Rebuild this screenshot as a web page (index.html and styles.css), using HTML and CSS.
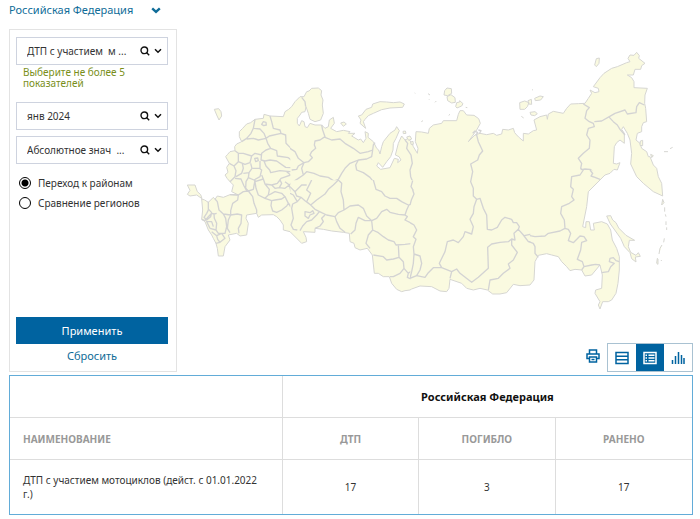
FILE: index.html
```html
<!DOCTYPE html>
<html lang="ru">
<head>
<meta charset="utf-8">
<title>Показатели ДТП</title>
<link rel="stylesheet" href="styles.css">
</head>
<body>
<svg class="sprite" aria-hidden="true">
  <symbol id="search" viewBox="0 0 10 10"><circle cx="4.3" cy="4.3" r="3.3"/><path d="M6.500 6.500 9.200 9.200"/></symbol>
  <symbol id="chevron" viewBox="0 0 8 6"><path d="M1 1.200 4 4.200 7 1.200"/></symbol>
</svg>
<main class="page">
  <header>
    <button class="region" type="button">Российская Федерация
      <svg class="region-arrow" viewBox="0 0 10 7"><path d="M1.200 1.300 5 4.800 8.800 1.300"/></svg>
    </button>
  </header>
  <section class="workspace">
    <form class="panel">
      <div class="field">
        <select class="select" aria-label="Показатель"><option>ДТП с участием&nbsp; м ...</option></select>
        <span class="field-icons"><svg class="search"><use href="#search"/></svg><svg class="chevron"><use href="#chevron"/></svg></span>
      </div>
      <p class="hint">Выберите не более 5 показателей</p>
      <div class="field">
        <select class="select" aria-label="Период"><option>янв 2024</option></select>
        <span class="field-icons"><svg class="search"><use href="#search"/></svg><svg class="chevron"><use href="#chevron"/></svg></span>
      </div>
      <div class="field">
        <select class="select" aria-label="Тип значения"><option>Абсолютное знач&nbsp; ...</option></select>
        <span class="field-icons"><svg class="search"><use href="#search"/></svg><svg class="chevron"><use href="#chevron"/></svg></span>
      </div>
      <div class="modes">
        <label class="mode"><input type="radio" name="mode" checked>Переход к районам</label>
        <label class="mode"><input type="radio" name="mode">Сравнение регионов</label>
      </div>
      <div class="actions">
        <button class="apply" type="button">Применить</button>
        <button class="reset" type="reset">Сбросить</button>
      </div>
    </form>
    <div class="view">
      <svg class="map" viewBox="531 120 1548 820" role="img" aria-label="Карта регионов">
        <defs>
          <clipPath id="west"><path d="M0 0H331V600H0Z"/></clipPath>
          <clipPath id="north"><path d="M0 0H390V301H0Z"/></clipPath>
          <clipPath id="south"><path d="M0 0H361V400H0Z"/></clipPath>
          <clipPath id="taymyr"><path d="M0 0H400V331H0Z"/></clipPath>
          <clipPath id="baikal"><path d="M0 0H361V400H0Z"/></clipPath>
          <clipPath id="chukotka"><path d="M0 0H450V391H0Z"/></clipPath>
        </defs>
        <g class="land">
          <path d="M605 597 L614 600 625 607 640 592 645 598 652 588 670 592 690 584 715 585 695 575 700 555 690 545 682 536 675 525 684 517 680 502 688 490 677 470 683 463 690 455 705 452 704 440 710 432 725 425 718 410 718 395 728 385 740 372 752 368 765 358 790 355 792 343 810 348 850 350 855 335 866 328 875 320 885 305 900 290 912 290 920 275 927 273 935 265 955 264 965 272 963 285 969 300 967 315 970 340 962 360 945 365 930 358 925 340 918 320 915 335 905 337 900 345 892 355 892 370 898 378 905 362 912 365 915 380 922 383 930 370 945 375 965 375 975 385 985 380 988 360 1000 352 1003 370 992 385 1010 395 1030 391 1050 395 1045 400 1065 400 1055 408 1075 420 1082 417 1090 428 1098 415 1095 395 1105 400 1104 412 1120 425 1130 445 1136 450 1140 462 1145 440 1150 425 1170 400 1185 390 1190 380 1198 392 1188 415 1180 430 1179 450 1172 470 1160 485 1148 502 1135 488 1130 498 1142 508 1170 503 1183 475 1195 478 1193 488 1203 480 1197 470 1186 465 1195 430 1205 408 1215 420 1225 415 1237 432 1240 440 1252 460 1254 445 1246 425 1248 395 1265 396 1285 400 1288 385 1300 375 1325 370 1330 362 1370 362 1375 343 1380 332 1390 332 1400 345 1422 346 1436 356 1441 370 1430 390 1405 425 1425 405 1440 400 1460 404 1480 400 1490 406 1505 402 1508 388 1525 390 1540 385 1544 398 1550 405 1558 413 1570 423 1570 400 1585 402 1600 392 1610 390 1606 375 1602 360 1620 350 1640 345 1642 358 1645 342 1660 334 1690 340 1700 325 1712 312 1735 311 1755 310 1765 295 1775 280 1770 270 1785 278 1797 275 1795 265 1780 260 1800 233 1812 220 1835 205 1852 200 1880 188 1890 185 1884 175 1890 165 1902 166 1910 157 1918 167 1916 175 1935 190 1925 197 1922 208 1905 208 1900 225 1882 225 1895 233 1902 245 1902 263 1942 265 1935 285 1934 310 1937 325 1940 365 1930 368 1925 380 1925 395 1912 400 1908 420 1920 430 1925 445 1940 455 1945 470 1950 470 1960 495 1970 505 1975 530 1985 550 1988 588 1960 575 1930 550 1910 530 1892 492 1895 460 1890 420 1882 400 1870 380 1865 388 1873 400 1873 430 1860 420 1850 428 1843 440 1840 490 1850 492 1860 488 1852 510 1842 508 1830 520 1815 525 1800 540 1765 575 1760 620 1748 680 1757 683 1758 665 1768 665 1772 690 1783 690 1780 670 1805 665 1822 672 1832 690 1837 720 1850 745 1858 770 1858 810 1854 850 1848 880 1835 900 1825 905 1808 905 1800 927 1795 915 1800 905 1785 880 1787 870 1805 865 1807 825 1800 795 1775 825 1755 828 1745 810 1725 808 1710 812 1700 800 1685 785 1675 770 1655 765 1640 761 1615 766 1605 785 1602 840 1590 855 1560 857 1540 853 1520 878 1500 882 1478 882 1462 870 1440 865 1420 870 1400 865 1385 850 1350 838 1347 865 1340 875 1320 873 1295 860 1260 858 1235 867 1230 870 1215 872 1205 875 1190 868 1175 850 1168 830 1150 830 1135 820 1123 820 1117 765 1102 745 1080 750 1065 743 1062 730 1050 725 1048 700 1030 697 995 693 970 688 945 685 945 697 910 695 918 712 920 725 905 730 895 720 880 705 870 695 850 690 850 675 840 660 830 650 820 644 785 645 775 652 770 640 740 645 738 655 745 670 740 705 720 708 710 700 685 705 690 720 675 740 670 768 655 768 652 745 648 730 640 715 635 705 625 690 615 665 605 658 608 630Z"/>
          <path d="M643 328 656 326 663 335 665 348 657 360 650 345ZM562 555 585 555 592 575 602 584 606 596 590 585 570 588 562 583 570 571ZM1075 348 1085 345 1098 328 1115 322 1118 312 1140 305 1160 306 1180 308 1200 306 1213 312 1208 322 1170 324 1145 329 1120 340 1105 347 1095 358 1090 365 1097 385 1080 370 1083 360ZM1022 369 1032 366 1039 372 1030 379ZM1334 272 1341 264 1354 266 1355 280 1343 287 1332 285ZM1341 290 1353 284 1365 293 1366 307 1355 309 1343 302ZM1367 320 1370 308 1379 306 1379 302 1389 311 1385 318 1371 324ZM1559 308 1574 303 1587 308 1582 320 1574 328 1560 328ZM1584 302 1594 298 1595 313 1586 312ZM1604 295 1620 288 1630 290 1622 300 1606 302ZM1590 337 1605 335 1612 341 1604 347 1593 345ZM1784 195 1789 176 1798 174 1797 190 1789 200ZM1820 648 1832 647 1838 660 1848 668 1856 684 1878 706 1904 721 1888 721 1885 740 1892 757 1908 766 1915 758 1921 769 1906 771 1908 786 1895 776 1890 758 1873 740 1862 715 1842 687 1831 672ZM1921 423 1928 421 1928 437 1920 436ZM1952 463 1960 467 1955 473Z"/>
          <path d="M1209 394 1216 393 1218 400 1210 401ZM1220 411 1230 408 1235 417 1226 421ZM1232 426 1239 424 1240 433 1233 433ZM1286 297 1288 299M1305 307 1309 303M1264 365 1269 362M1284 281 1290 285M1244 279 1246 280M1346 346 1350 343M1397 322 1402 323M1564 349 1571 354M1596 269 1599 270M1992 455 2004 455M2010 446 2018 442M1988 598 1985 615 1992 608ZM1994 622V635M1996 643 1998 650M1998 664V675M2000 682V690M1993 715 1991 727M1986 735 1980 745 1977 762M1972 775 1970 790 1974 793 1974 777ZM1983 780 1985 783"/>
        </g>
        <g class="borders" transform="translate(540 240)" clip-path="url(#west)">
          <path d="M225 118 220 145 213 160 200 175 185 185M222 145 240 147 252 160 258 175M270 108 275 125 280 145 300 150 303 160 268 168 258 175 235 180 220 175 200 177M258 175 263 190 272 205 290 212 292 228 325 233 345 250 362 255 358 265 335 263 317 262 290 243 270 240 255 243 243 240 245 220 258 210 272 205M245 225 225 220 215 228 190 220 175 220 165 212M303 160 317 165 318 190 335 207 357 225M148 250 162 258 175 245 175 222M175 245 195 253 210 248 215 228M162 258 168 272 165 290 150 305M168 290 185 280 190 265 187 250M190 280 207 278 216 265 212 250M207 278 205 293 222 300 240 290 245 270 238 265 218 265M240 265 240 243M252 243 258 258 269 270 272 278 300 272 330 275 358 265M245 285 250 297 255 312 275 315 292 310 303 295 318 290 332 285 320 275M205 293 198 305 197 325 205 333 220 328 225 300M165 295 183 297 192 318 200 332M150 344 175 345 190 335 205 333 218 350 222 370 230 390 230 400M250 297 225 305 228 325 235 345 255 355 265 345 268 328 255 312M255 355 275 362 285 360 305 357 315 350 305 340 285 335 267 345M275 315 285 325 298 323 305 310 300 300 292 310M298 323 315 325 328 315 315 305M328 315 335 308M275 362 273 377 278 393 290 397 305 390 320 378 325 370 315 350M325 370 333 382M328 315 333 335M105 357 112 365 117 390 130 402 152 405 145 420 142 445 150 458M175 345 173 360 158 370 152 392 152 405M65 418 75 422 85 410 95 400 102 402 110 400M85 365 85 390 80 400 72 412 80 420 92 410 95 398 86 388M102 402 103 415 110 430 108 450 90 445M108 450 115 460 135 460 140 440 137 415 130 402M152 405 172 402 185 405 183 430 175 445 177 460M95 455 110 467 125 460 135 475 120 487 107 490M90 445 80 425 95 425 100 440M110 467 113 478 120 487M250 125 258 127 259 135 251 137 245 133ZM224 235 233 234 235 242 227 245ZM325 370 333 378"/>
        </g>
        <g class="borders" transform="translate(870 240)" clip-path="url(#north)">
          <path d="M35 52 45 65 47 80M95 135 98 150 105 170 90 180 75 183 73 195 77 205 65 215 60 225 67 233 55 245 42 248M105 172 125 180 150 177 165 190 190 205 210 220 235 215 248 210 250 195 255 188M248 210 245 230 230 237 205 240 180 250 165 265 155 280 145 298 132 303 115 292 90 288 72 280 50 275 40 285M0 205 15 215 25 235 42 248 35 265 40 285 25 295 10 305M145 298 120 318M205 240 197 255 200 270 220 278 240 292 250 305M345 180 353 190 350 205 363 225 367 250 360 270 362 290 368 305M42 248 25 258 20 268 5 270"/>
        </g>
        <g class="borders" transform="translate(870 540)" clip-path="url(#south)">
          <path d="M145 0 130 15 115 28 105 42 80 60 62 75 45 62 33 52 20 48 15 35 0 20M62 75 75 88 95 98 110 105 135 110 145 98 162 90 160 60 153 35 155 10 145 0M62 75 50 65 62 40 50 30 60 10 65 0M33 52 22 65 8 72 5 85 10 115 3 135 10 148 22 150M22 65 10 45 0 40M15 35 35 15 50 15M105 105 95 115 100 125 90 138 75 145M45 95 60 98 68 92 72 100 60 105 55 115 45 108ZM30 152 38 138 50 125 65 120 80 105 88 95M162 90 180 78 205 75 220 85 230 108 245 122 225 122 205 112 198 130 195 150 182 162M135 110 140 125 150 145 165 157M245 122 260 115 275 95 290 88 300 97 325 103 345 105 350 90 357 75 375 62M245 122 248 150 235 165 228 190 240 205M248 150 265 158 280 170 295 180 312 185 318 195 345 193 370 190M345 105 352 110 345 120 365 130M325 195 327 232 310 237 290 240 280 230 250 225M327 232 340 245 342 265 330 280 310 290 300 290M342 265 355 280 368 270M355 280 352 292 365 298M250 0 258 28 275 35 285 48 300 55 320 55 335 65 355 75"/>
        </g>
        <g class="borders" transform="translate(1230 240)" clip-path="url(#taymyr)">
          <path d="M200 165 205 185 218 213 208 225 203 240 182 252 188 275 182 305 190 325 190 332M188 160 195 153 203 158 197 166M205 150 213 152 209 159M8 302 3 320 12 335"/>
        </g>
        <g class="borders" transform="translate(1230 570)" clip-path="url(#baikal)">
          <path d="M190 0 190 18 200 28 210 25 220 55 230 75 232 118 245 120 262 112 275 90 285 82 305 88 310 98 320 98 328 110 325 118 340 135 355 155 368 155M200 28 192 50 190 70 180 88 190 110 185 132 165 125 160 140 145 158 130 150 112 155 105 185 88 220 95 233 125 245 140 237 150 250 185 277 205 262 235 235 233 172 245 162 270 157 295 155 305 147 315 150 312 130 325 118M305 147 305 165 322 187 310 210 295 222 300 235 280 250 265 265 240 270 235 300M125 245 120 265M95 233 70 233 55 248 45 262 20 257 0 265M343 137 360 133 390 137M8 0 12 12 4 30 0 45M0 98 12 105 20 120 10 140 18 148 10 170 12 192 30 198 35 220 30 240 20 257M12 192 10 220 5 245 0 265"/>
        </g>
        <g class="borders" transform="translate(1590 120)" clip-path="url(#chukotka)">
          <path d="M160 192 178 203 170 212 165 235 178 245 190 250 193 260 175 265 170 285 180 300 178 325 160 340 145 355 155 370 152 385 160 392M152 390 165 387 180 388 190 395M193 245 215 243 238 230 255 220 285 210 292 222 318 218 320 200 328 188 343 195M238 232 250 245 262 255 270 268 285 285"/>
        </g>
        <g class="borders" transform="translate(1590 510)">
          <path d="M180 0 188 10 183 18 195 22 210 28M160 0 150 15 125 20 122 50 130 58 125 80 132 90 118 100 95 110 92 130 103 150 105 175 90 183 55 190 45 198 15 200 0 197M-4 215 10 220 15 230 15 250 25 262M105 175 115 178 122 190 115 212 130 218 150 198 162 200 170 212 155 217 152 240 142 268 157 275 162 290 155 300M162 290 185 285 197 283 210 285M215 308 235 305 242 290 253 280 238 275 240 265 250 263 258 272 268 275"/>
        </g>
      </svg>
      <div class="toolbar">
        <button class="print" type="button" aria-label="Печать">
          <svg viewBox="0 0 14 14"><path d="M3.500 5V1h7v4M3.500 9.500H1V5h12v4.500h-2.500M3.500 8h7v5h-7zM5.500 10.500h3"/></svg>
        </button>
        <div class="switch">
          <button type="button" aria-label="Строки"><svg viewBox="0 0 14 14"><path d="M1 1.500h12v11H1zM1 5.200h12M1 8.800h12"/></svg></button>
          <button class="active" type="button" aria-label="Таблица"><svg viewBox="0 0 14 14"><path d="M1 1.500h12v11H1zM2.500 4.200h1.500M5.500 4.200h6M2.500 7h1.500M5.500 7h6M2.500 9.800h1.500M5.500 9.800h6"/></svg></button>
          <button type="button" aria-label="Диаграмма"><svg viewBox="0 0 14 14"><path d="M1.500 13V9M4.500 13V5M7.500 13V1M10.500 13V4M13 13V7"/></svg></button>
        </div>
      </div>
    </div>
  </section>
  <table class="stats">
    <colgroup><col class="name"><col class="value"><col class="value"><col class="value"></colgroup>
    <thead>
      <tr class="country"><td></td><th colspan="3">Российская Федерация</th></tr>
      <tr class="heads"><th>НАИМЕНОВАНИЕ</th><th>ДТП</th><th>ПОГИБЛО</th><th>РАНЕНО</th></tr>
    </thead>
    <tbody>
      <tr><td>ДТП с участием мотоциклов (дейст. с 01.01.2022 г.)</td><td>17</td><td>3</td><td>17</td></tr>
    </tbody>
  </table>
</main>
</body>
</html>
```

FILE: styles.css
```css
* { box-sizing: border-box; }

body {
  margin: 0;
  background: #fff;
  color: #333;
  font: 11px/14px "Noto Sans", "Open Sans", sans-serif;
}

button {
  padding: 0;
  border: 0;
  background: none;
  color: #006599;
  font: inherit;
  cursor: pointer;
}

svg {
  display: block;
  fill: none;
  stroke: currentColor;
}

.sprite { position: absolute; width: 0; height: 0; }

.page { padding: 0 7px 4px 9px; }

.region {
  display: flex;
  align-items: center;
  gap: 18px;
  height: 20px;
  color: #0f6c98;
}

.region-arrow { width: 10px; height: 7px; stroke-width: 2.4; }

.workspace { display: flex; margin-top: 9px; }

.panel {
  display: flex;
  flex-direction: column;
  flex: 0 0 168px;
  min-height: 343px;
  padding: 7px 8px 6px 6px;
  border: 1px solid #e3e3e3;
}

.field { position: relative; margin-bottom: 6px; }

.select {
  display: block;
  width: 100%;
  height: 28px;
  padding: 0 30px 0 10px;
  border: 1px solid #ced3df;
  border-radius: 0;
  appearance: none;
  background: #fff;
  color: #333;
  font: inherit;
  font-size: 10px;
}

.field-icons {
  position: absolute;
  top: 0;
  right: 6px;
  bottom: 0;
  display: flex;
  align-items: center;
  gap: 4px;
  color: #111;
  pointer-events: none;
}

.search { width: 10px; height: 10px; stroke-width: 1.4; }
.chevron { width: 8px; height: 6px; stroke-width: 1.5; }

.hint {
  margin: -4px 20px 13px 7px;
  color: #7a8f1a;
  font-size: 10px;
  line-height: 11px;
}

.modes { display: grid; gap: 6px; margin-top: 6px; }

.mode {
  display: flex;
  align-items: center;
  gap: 7px;
  padding-left: 3px;
  font-size: 10px;
}

.mode input {
  width: 12px;
  height: 12px;
  margin: 0;
  border: 1px solid #000;
  border-radius: 50%;
  appearance: none;
}

.mode input:checked { background: radial-gradient(#000 0 3px, #fff 4px); }

.actions { display: grid; gap: 3px; margin-top: auto; }

.apply {
  height: 27px;
  background: #0063a0;
  color: #fff;
}

.reset { height: 18px; color: #0f6c98; }

.view {
  display: flex;
  flex: 1;
  flex-direction: column;
  min-width: 0;
  padding-top: 11px;
}

.map { width: 100%; height: auto; stroke-linejoin: round; }
.land { fill: #fafae0; stroke: #d6d6d2; stroke-width: 3; }
.borders { stroke: #d3d3d3; stroke-width: 4; }

.toolbar {
  display: flex;
  align-items: center;
  justify-content: flex-end;
  gap: 7px;
  margin-top: auto;
}

.toolbar svg { width: 14px; height: 14px; stroke-width: 1.5; }

.print { padding-bottom: 4px; color: #0063a0; }

.switch { display: flex; border: 1px solid #a9c2d2; }

.switch button {
  display: grid;
  place-items: center;
  width: 28px;
  height: 27px;
  color: #0063a0;
}

.switch .active { background: #0063a0; color: #fff; }

.stats {
  width: 100%;
  margin-top: 3px;
  border: 1px solid #62acd8;
  border-collapse: separate;
  border-spacing: 0;
  table-layout: fixed;
}

.name { width: 40%; }
.value { width: 20%; }

.stats th,
.stats td {
  height: 42px;
  padding: 0 18px 0 13px;
  border: solid #ddd;
  border-width: 0 1px 1px 0;
  text-align: left;
}

.stats th:last-child,
.stats td:last-child { border-right: 0; }

.stats th + th,
.stats td + th,
.stats td + td { padding: 0; text-align: center; }

.stats .country th { color: #111; }
.stats .heads th { color: #999; font-size: 10px; }
.stats tbody td { height: 54px; border-bottom: 0; font-size: 10px; }
```
